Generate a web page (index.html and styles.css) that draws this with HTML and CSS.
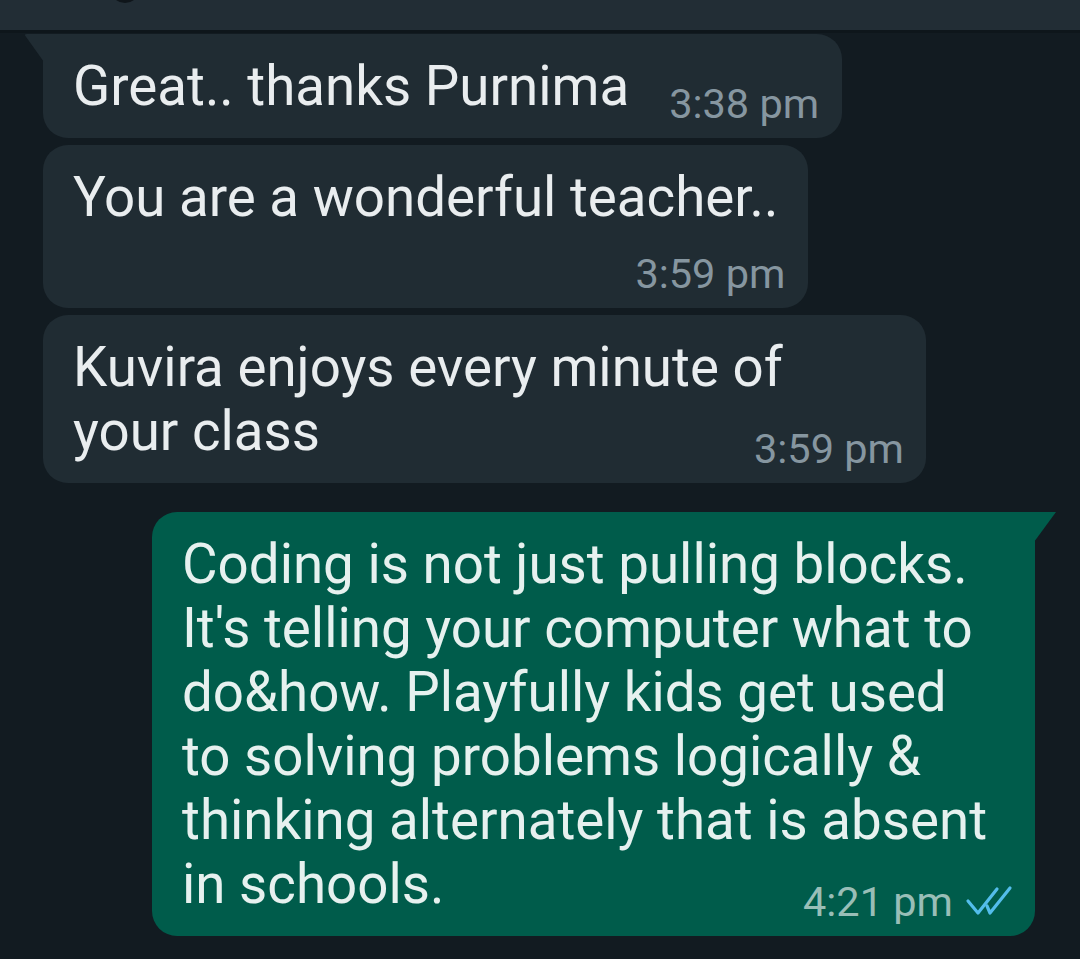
FILE: index.html
```html
<!DOCTYPE html>
<html lang="en">
<head>
    <meta charset="UTF-8">
    <meta name="viewport" content="width=device-width, initial-scale=1.0">
    <title>Chat</title>
    <link rel="stylesheet" href="styles.css">
</head>
<body>
    <div class="topbar">
        <span class="avatar"></span>
    </div>

    <div class="chat">
        <div class="msg in first">
            <div class="bubble row">
                <p class="text">Great.. thanks Purnima</p>
                <span class="time">3:38 pm</span>
            </div>
        </div>
        <div class="msg in">
            <div class="bubble stack">
                <p class="text">You are a wonderful teacher..</p>
                <span class="time">3:59 pm</span>
            </div>
        </div>
        <div class="msg in">
            <div class="bubble overlay wide">
                <p class="text">Kuvira enjoys every minute of<br>your class</p>
                <span class="time">3:59 pm</span>
            </div>
        </div>

        <div class="msg out first">
            <div class="bubble overlay wide">
                <p class="text">Coding is not just pulling blocks.<br>It's telling your computer what to<br>do&amp;how. Playfully kids get used<br>to solving problems logically &amp;<br>thinking alternately that is absent<br>in schools.</p>
                <span class="time">4:21 pm
                    <svg class="ticks" width="48" height="31" viewBox="0 0 48 31">
                        <polyline points="3,16 13,28 32,4" fill="none" stroke="#53bdeb" stroke-width="3.2" stroke-linecap="round" stroke-linejoin="round"/>
                        <polyline points="22,21 25,28 45,3" fill="none" stroke="#53bdeb" stroke-width="3.2" stroke-linecap="round" stroke-linejoin="round"/>
                    </svg>
                </span>
            </div>
        </div>
    </div>
</body>
</html>
```

FILE: styles.css
```css
body {
    margin: 0;
    padding: 0;
    background-color: #121b21;
    font-family: Roboto, "Noto Sans", sans-serif;
    color: #e9edef;
    height: 959px;
    overflow: hidden;
}
.topbar {
    height: 30px;
    background: #222d35;
    border-bottom: 3px solid #0e161b;
    display: flex;
}
.avatar {
    width: 30px;
    height: 30px;
    margin: -27px 0 0 110px;
    border-radius: 50%;
    background: #0f151a;
}
.chat {
    display: flex;
    flex-direction: column;
    padding: 1px 45px 0 43px;
}
.msg {
    display: flex;
    margin-top: 7px;
}
.msg.first {
    margin-top: 0;
}
.msg.out.first {
    margin-top: 29px;
}
.msg.in {
    justify-content: flex-start;
}
.msg.out {
    justify-content: flex-end;
}
.bubble {
    position: relative;
    background: #202c33;
    border-radius: 25px;
    padding: 20px 23px 10px 30px;
    max-width: 883px;
    box-sizing: border-box;
}
.msg.out .bubble {
    background: #005c4b;
    color: #e6f1ef;
}
.bubble.wide {
    width: 883px;
}
.text {
    margin: 0 0 10px 0;
    font-size: 54.7px;
    line-height: 64px;
    white-space: nowrap;
}
.time {
    font-size: 41.5px;
    line-height: 48px;
    color: #8696a0;
    white-space: nowrap;
    display: flex;
    align-items: center;
}
.msg.out .time {
    color: #99beb7;
}
.ticks {
    margin: 0 0 0 12px;
    position: relative;
    top: -2px;
}

/* layouts of the bubble */
.bubble.row {
    display: flex;
    align-items: flex-end;
}
.bubble.row .time {
    margin-left: 40px;
}
.bubble.stack {
    display: flex;
    flex-direction: column;
    padding-right: 30px;
}
.bubble.stack .text {
    margin-bottom: 21px;
}
.bubble.stack .time {
    align-self: flex-end;
    margin-right: -7px;
}
.bubble.overlay {
    display: grid;
    padding-right: 22px;
}
.bubble.overlay .text,
.bubble.overlay .time {
    grid-area: 1 / 1;
}
.bubble.overlay .time {
    justify-self: end;
    align-self: end;
}

/* tails */
.msg.in.first .bubble {
    border-top-left-radius: 0;
}
.msg.in.first .bubble::before {
    content: "";
    position: absolute;
    left: -19px;
    top: 0;
    width: 20px;
    height: 28px;
    background: #202c33;
    border-top-left-radius: 3px;
    clip-path: polygon(0 0, 100% 0, 100% 100%);
}
.msg.out.first .bubble {
    border-top-right-radius: 0;
}
.msg.out.first .bubble::after {
    content: "";
    position: absolute;
    right: -21px;
    top: 0;
    width: 22px;
    height: 30px;
    background: #005c4b;
    clip-path: polygon(0 0, 100% 0, 0 100%);
}
```
